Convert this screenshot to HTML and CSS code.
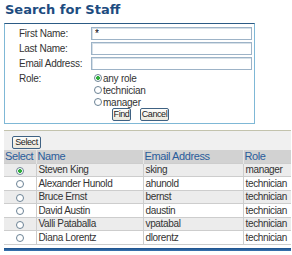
FILE: index.html
```html
<!DOCTYPE html>
<html lang="en">
<head>
  <meta charset="UTF-8" />
  <title>Search for Staff</title>
  <link rel="stylesheet" href="styles.css">
</head>
<body>
  <h1 class="title">Search for Staff</h1>

  <form class="search">
    <div class="field">
      <label>First Name:</label>
      <input class="text" type="text" value="*" />
    </div>
    <div class="field">
      <label>Last Name:</label>
      <input class="text" type="text" />
    </div>
    <div class="field">
      <label>Email Address:</label>
      <input class="text" type="text" />
    </div>
    <div class="field role">
      <label>Role:</label>
      <div class="options">
        <label class="opt"><input type="radio" name="role" checked />any role</label>
        <label class="opt"><input type="radio" name="role" />technician</label>
        <label class="opt"><input type="radio" name="role" />manager</label>
      </div>
    </div>
    <div class="actions">
      <button type="button" class="btn find">Find</button>
      <button type="button" class="btn cancel">Cancel</button>
    </div>
  </form>

  <div class="results">
    <div class="toolbar">
      <button type="button" class="btn select">Select</button>
    </div>
    <table class="staff">
      <colgroup>
        <col style="width:32px">
        <col style="width:107px">
        <col style="width:100px">
        <col>
      </colgroup>
      <thead>
        <tr><th>Select</th><th>Name</th><th>Email Address</th><th>Role</th></tr>
      </thead>
      <tbody>
        <tr class="alt"><td class="pick"><input type="radio" name="staff" checked /></td><td>Steven King</td><td>sking</td><td>manager</td></tr>
        <tr><td class="pick"><input type="radio" name="staff" /></td><td>Alexander Hunold</td><td>ahunold</td><td>technician</td></tr>
        <tr class="alt"><td class="pick"><input type="radio" name="staff" /></td><td>Bruce Ernst</td><td>bernst</td><td>technician</td></tr>
        <tr><td class="pick"><input type="radio" name="staff" /></td><td>David Austin</td><td>daustin</td><td>technician</td></tr>
        <tr class="alt"><td class="pick"><input type="radio" name="staff" /></td><td>Valli Pataballa</td><td>vpatabal</td><td>technician</td></tr>
        <tr><td class="pick"><input type="radio" name="staff" /></td><td>Diana Lorentz</td><td>dlorentz</td><td>technician</td></tr>
      </tbody>
    </table>
  </div>

  <div class="bottom-bar"></div>
</body>
</html>
```

FILE: styles.css
```css
* { box-sizing: border-box; }

body {
  margin: 0;
  font-family: 'Liberation Sans', Arial, sans-serif;
  font-size: 10px;
  color: #222;
  background: #fff;
}

.title {
  margin: 0 0 6px;
  padding: 2px 5px 0;
  font-family: 'DejaVu Sans', sans-serif;
  font-size: 13px;
  line-height: 15px;
  font-weight: bold;
  color: #1d4c80;
}

/* search box */
.search {
  margin: 0 0 0 4px;
  width: 251px;
  padding: 3px 2px 2px 14px;
  border: 1px solid #7fb8d6;
  border-top-color: #2c5b85;
}

.field {
  display: grid;
  grid-template-columns: 72px 161px;
  align-items: center;
  margin-bottom: 2px;
  letter-spacing: -0.25px;
  color: #333;
}

.field > label {
  line-height: 13px;
}

.text {
  height: 13px;
  width: 161px;
  padding: 0 3px;
  border: 1px solid #9db3c7;
  box-shadow: inset 1px 1px 0 #d6e0e8;
  font-family: inherit;
  font-size: 10px;
  line-height: 11px;
  outline: none;
}

.role {
  align-items: start;
  margin: 0;
}

.options {
  display: flex;
  flex-direction: column;
  padding-left: 3px;
}

.opt {
  display: flex;
  align-items: center;
  height: 12px;
}

input[type="radio"] {
  appearance: none;
  -webkit-appearance: none;
  width: 8px;
  height: 8px;
  margin: 0 1px 0 0;
  border: 1px solid #6b8295;
  border-radius: 50%;
  background: #fff;
}

input[type="radio"]:checked {
  background: radial-gradient(circle, #2fae3c 0 1.6px, #fff 2.2px);
}

.actions {
  display: flex;
  gap: 9px;
  padding-left: 93px;
}

.btn {
  height: 13px;
  padding: 0;
  border: 1px solid #3f6283;
  border-radius: 2px;
  background: linear-gradient(#fdfdfb, #ebe8dc);
  font-family: inherit;
  font-size: 9px;
  line-height: 11px;
  letter-spacing: -0.4px;
  color: #222;
}

.find { width: 19px; }
.cancel { width: 29px; }
.select { width: 29px; }

/* results */
.results {
  margin: 6px 0 0 4px;
  width: 287px;
  border-top: 1px solid #c3c3ad;
}

.toolbar {
  background: #f0f0f0;
  padding: 5px 0 1px 8px;
}

.staff {
  width: 100%;
  border-collapse: collapse;
  table-layout: fixed;
}

.staff th {
  height: 13px;
  padding: 0 1px;
  background: #d2d2d2;
  border-left: 1px solid #e6e6e6;
  color: #2a5c9b;
  font-size: 11px;
  font-weight: normal;
  letter-spacing: -0.4px;
  text-align: left;
  line-height: 12px;
}

.staff th:first-child { border-left: none; }

.staff td {
  height: 13.5px;
  padding: 0 2px;
  border: 1px solid #cdcdcd;
  font-size: 10px;
  letter-spacing: -0.35px;
  line-height: 11px;
  color: #333;
  white-space: nowrap;
  overflow: hidden;
}

.staff td:first-child { border-left: none; }
.staff td:last-child { border-right: none; }

.staff tr.alt td { background: #ececec; }

.staff td.pick {
  text-align: center;
  padding: 0;
}

.staff td.pick input {
  vertical-align: middle;
  margin: 0;
}

.bottom-bar {
  margin: 3px 0 0 4px;
  width: 287px;
  height: 3px;
  background: linear-gradient(#1b4f8a, #3a74b0);
}
```
